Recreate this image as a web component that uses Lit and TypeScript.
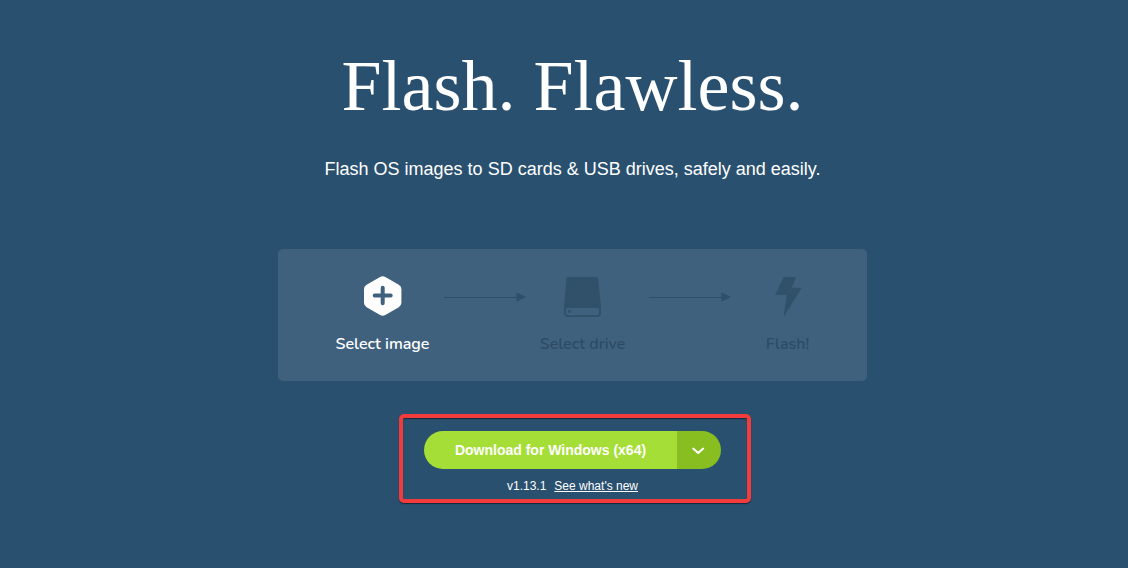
import { LitElement, html, svg, css } from "lit";
import { customElement, property } from "lit/decorators.js";

@customElement("flow-arrow")
class FlowArrow extends LitElement {
  static styles = css`
    :host {
      display: flex;
      justify-content: flex-end;
      padding-top: 16px;
    }
    svg {
      display: block;
    }
  `;

  render() {
    return html`<svg width="82" height="10" viewBox="0 0 82 10" aria-hidden="true">
      <path d="M0 5H73" stroke="#2c4e6b" stroke-width="1" shape-rendering="crispEdges" />
      <path d="M72.5 0.2L82 5L72.5 9.8Z" fill="#2f506c" />
    </svg>`;
  }
}

const icons = {
  image: svg`
    <path d="M17.1 0.9Q19.7 -0.6 22.3 0.9L35.8 8.8Q38.4 10.3 38.4 13.2V26.8Q38.4 29.7 35.8 31.2L22.3 39.1Q19.7 40.6 17.1 39.1L3.6 31.2Q1 29.7 1 26.8V13.2Q1 10.3 3.6 8.8Z" fill="#fff"/>
    <path d="M11.7 19.5H27.7M19.700 11.8V27.2" stroke="#40617e" stroke-width="4" stroke-linecap="round" fill="none"/>`,
  drive: svg`
    <path fill-rule="evenodd" d="M5.2 1H33.2Q35 1 35.2 2.8L38 31.5V36.5Q38 41 34 41H5Q1 41 1 36.5V31.5L3.4 2.8Q3.6 1 5.2 1ZM4.5 32Q2.8 32 2.8 33.7V36.3Q2.8 39.2 5.5 39.2H33.5Q36.2 39.2 36.2 36.3V33.7Q36.2 32 34.5 32Z" fill="#31506a"/>
    <circle cx="6.5" cy="35.5" r="1.6" fill="#31506a"/>`,
  flash: svg`<path d="M15.8 1H28.2L23.7 11.8H33.8L15.6 41L18.6 19H7Z" fill="#31506a"/>`,
};

@customElement("flow-step")
class FlowStep extends LitElement {
  @property() icon: keyof typeof icons = "image";
  @property() label = "";
  @property({ type: Boolean, reflect: true }) active = false;

  static styles = css`
    :host {
      display: flex;
      flex-direction: column;
      align-items: center;
      gap: 16px;
      color: #2d4b65;
      font: 600 16px/24px Nunito, Lato, sans-serif;
      white-space: nowrap;
    }
    :host([active]) {
      color: #fff;
    }
    svg {
      display: block;
      overflow: visible;
    }
  `;

  render() {
    return html`
      <svg width="40" height="40" viewBox="0 0 40 40" aria-hidden="true">${icons[this.icon]}</svg>
      <span>${this.label}</span>
    `;
  }
}

@customElement("app-root")
class AppRoot extends LitElement {
  static styles = css`
    :host {
      display: block;
      box-sizing: border-box;
      min-height: 100vh;
      padding: 46px 0 62px 17px;
      background: #29506f;
      color: #fff;
      font-family: "Liberation Sans", Arial, sans-serif;
    }
    main {
      display: flex;
      flex-direction: column;
      align-items: center;
    }
    h1 {
      margin: 0;
      font: 400 72px/80px "Liberation Serif", "Times New Roman", serif;
      text-align: center;
    }
    .lead {
      margin: 32px 0 0;
      font-size: 18px;
      line-height: 22px;
      text-align: center;
    }
    .flow {
      box-sizing: border-box;
      width: 100%;
      max-width: 589px;
      margin-top: 69px;
      padding: 27px 23px 25px 48px;
      border-radius: 5px;
      background: #40617e;
      display: grid;
      grid-template-columns: 113fr 87fr 113fr 92fr 113fr;
    }
    .download {
      position: relative;
      margin-top: 50px;
      display: flex;
      flex-direction: column;
      align-items: center;
      gap: 8px;
    }
    .highlight {
      position: absolute;
      inset: -17px -30px -8px -25px;
      border: 4px solid #f33b3b;
      border-radius: 5px;
      box-shadow: 0 1px 1px rgba(20, 25, 45, 0.8), inset 0 1px 1px rgba(20, 25, 45, 0.8);
      pointer-events: none;
    }
    .split {
      display: flex;
      height: 38px;
      border-radius: 19px;
      overflow: hidden;
    }
    button {
      margin: 0;
      border: 0;
      color: #fff;
      font: 700 14px/20px "Liberation Sans", Arial, sans-serif;
      cursor: pointer;
    }
    .primary {
      padding: 0 31px;
      background: #a5de37;
    }
    .more {
      display: grid;
      place-items: center;
      width: 44px;
      padding: 0;
      background: #88be20;
    }
    .version {
      display: flex;
      gap: 8px;
      font-size: 12px;
      line-height: 18px;
    }
    a {
      color: inherit;
      text-decoration: underline;
    }
  `;

  render() {
    return html`
      <main>
        <h1>Flash. Flawless.</h1>
        <p class="lead">Flash OS images to SD cards &amp; USB drives, safely and easily.</p>
        <section class="flow">
          <flow-step icon="image" label="Select image" active></flow-step>
          <flow-arrow></flow-arrow>
          <flow-step icon="drive" label="Select drive"></flow-step>
          <flow-arrow></flow-arrow>
          <flow-step icon="flash" label="Flash!"></flow-step>
        </section>
        <section class="download">
          <div class="split">
            <button class="primary" type="button">Download for Windows (x64)</button>
            <button class="more" type="button" aria-label="More downloads">
              <svg width="14" height="10" viewBox="0 0 14 10" aria-hidden="true">
                <path d="M1.2 3.6L6.2 8L11.2 3.6" fill="none" stroke="#fff" stroke-width="2" stroke-linecap="round" stroke-linejoin="round" />
              </svg>
            </button>
          </div>
          <div class="version">
            <span>v1.13.1</span>
            <a href="#changelog">See what's new</a>
          </div>
          <div class="highlight"></div>
        </section>
      </main>
    `;
  }
}
